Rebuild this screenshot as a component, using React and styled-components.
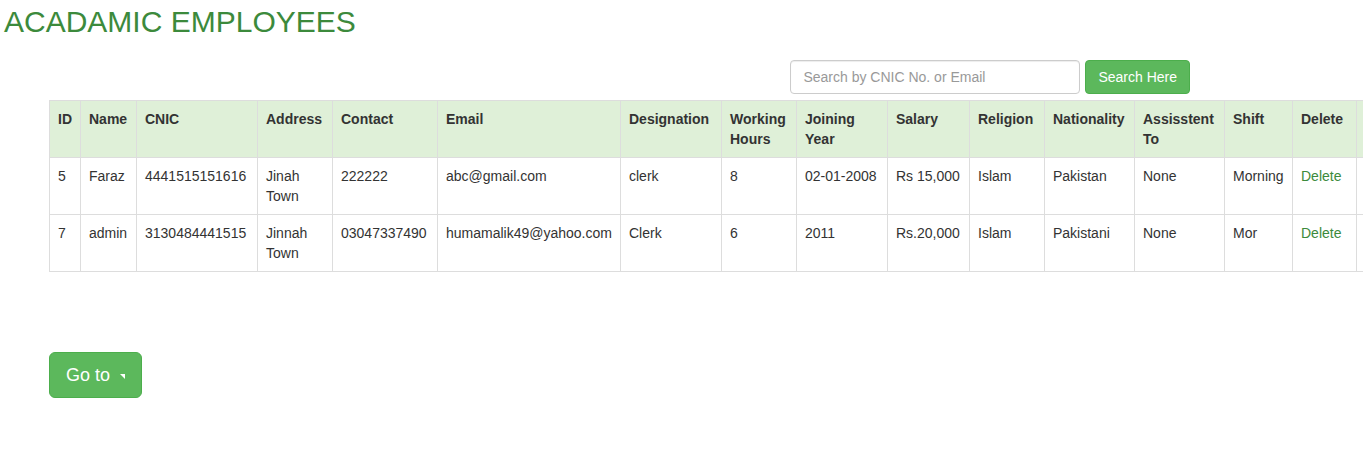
import React from 'react';
import styled, { createGlobalStyle } from 'styled-components';

const GlobalStyle = createGlobalStyle`
  html, body {
    margin: 0;
    padding: 0;
    overflow-x: hidden;
    background: #fff;
  }
  *, *::before, *::after {
    box-sizing: border-box;
  }
  body {
    font-family: "Liberation Sans", Arial, Helvetica, sans-serif;
    font-size: 14px;
    line-height: 1.42857;
    color: #333;
  }
`;

const Page = styled.div`
  width: 100%;
  overflow: hidden;
`;

const Title = styled.h2`
  margin: 5px 0 0 4px;
  font-size: 30px;
  font-weight: 400;
  line-height: 1.1;
  color: #3c8a3c;
`;

const SearchForm = styled.form`
  display: flex;
  justify-content: flex-end;
  gap: 5px;
  width: 1190px;
  margin-top: 22px;
`;

const SearchInput = styled.input`
  width: 290px;
  height: 34px;
  padding: 6px 12px;
  font-family: inherit;
  font-size: 14px;
  color: #555;
  border: 1px solid #ccc;
  border-radius: 4px;
  box-shadow: inset 0 1px 1px rgba(0, 0, 0, 0.075);

  &::placeholder {
    color: #999;
  }

  &:focus {
    outline: none;
    border-color: #66afe9;
  }
`;

const Button = styled.button`
  display: inline-flex;
  align-items: center;
  padding: ${({ $large }) => ($large ? '10px 16px' : '6px 12px')};
  font-family: inherit;
  font-size: ${({ $large }) => ($large ? '18px' : '14px')};
  line-height: ${({ $large }) => ($large ? '24px' : '20px')};
  color: #fff;
  background-color: #5cb85c;
  border: 1px solid #4cae4c;
  border-radius: ${({ $large }) => ($large ? '6px' : '4px')};
  cursor: pointer;

  &:hover {
    background-color: #449d44;
  }
`;

const Caret = styled.span`
  display: inline-block;
  width: 0;
  height: 0;
  margin-left: 10px;
  margin-top: 3px;
  border-top: 5px solid #fff;
  border-left: 5px solid transparent;
`;

const TableWrap = styled.div`
  margin: 6px 0 0 49px;
  overflow: hidden;
`;

const Table = styled.table`
  width: 1377px;
  table-layout: fixed;
  border-collapse: collapse;
  border-spacing: 0;
`;

const Th = styled.th`
  width: ${({ $w }) => $w}px;
  padding: 9px 8px 7px;
  text-align: left;
  vertical-align: top;
  font-weight: 700;
  background-color: #dff0d8;
  border: 1px solid #ddd;
`;

const Td = styled.td`
  padding: 9px 8px 7px;
  vertical-align: top;
  border: 1px solid #ddd;
`;

const DeleteLink = styled.a`
  color: #3c8a3c;
  text-decoration: none;
  cursor: pointer;

  &:hover {
    text-decoration: underline;
  }
`;

const Footer = styled.div`
  margin: 80px 0 0 49px;
`;

const columns = [
  ['ID', 31],
  ['Name', 56],
  ['CNIC', 121],
  ['Address', 75],
  ['Contact', 105],
  ['Email', 183],
  ['Designation', 101],
  ['Working Hours', 75],
  ['Joining Year', 91],
  ['Salary', 82],
  ['Religion', 75],
  ['Nationality', 90],
  ['Assisstent To', 90],
  ['Shift', 68],
  ['Delete', 64],
  ['', 70],
];

const employees = [
  ['5', 'Faraz', '4441515151616', 'Jinah Town', '222222', 'abc@gmail.com', 'clerk', '8', '02-01-2008', 'Rs 15,000', 'Islam', 'Pakistan', 'None', 'Morning'],
  ['7', 'admin', '3130484441515', 'Jinnah Town', '03047337490', 'humamalik49@yahoo.com', 'Clerk', '6', '2011', 'Rs.20,000', 'Islam', 'Pakistani', 'None', 'Mor'],
];

const App = () => (
  <Page>
    <GlobalStyle />
    <Title>ACADAMIC EMPLOYEES</Title>

    <SearchForm onSubmit={(e) => e.preventDefault()}>
      <SearchInput type="text" placeholder="Search by CNIC No. or Email" />
      <Button type="submit">Search Here</Button>
    </SearchForm>

    <TableWrap>
      <Table>
        <thead>
          <tr>
            {columns.map(([label, w], i) => (
              <Th key={i} $w={w}>{label}</Th>
            ))}
          </tr>
        </thead>
        <tbody>
          {employees.map((row) => (
            <tr key={row[0]}>
              {row.map((cell, i) => (
                <Td key={i}>{cell}</Td>
              ))}
              <Td><DeleteLink>Delete</DeleteLink></Td>
              <Td />
            </tr>
          ))}
        </tbody>
      </Table>
    </TableWrap>

    <Footer>
      <Button type="button" $large>
        Go to <Caret />
      </Button>
    </Footer>
  </Page>
);

export default App;
